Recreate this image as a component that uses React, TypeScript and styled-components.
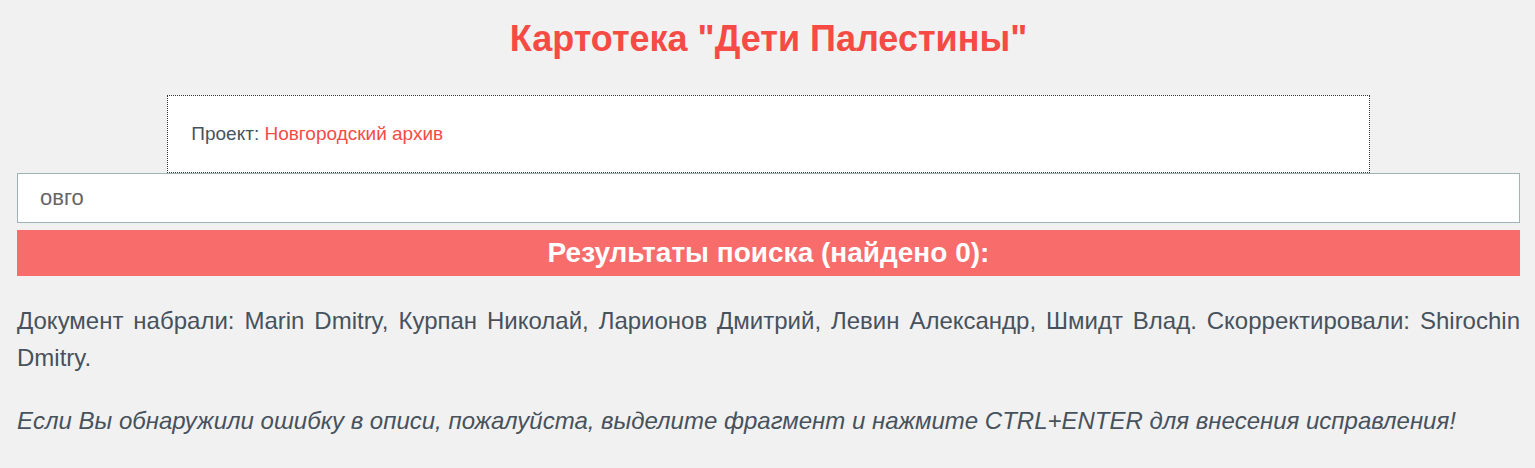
import styled, { createGlobalStyle } from 'styled-components';

const GlobalStyle = createGlobalStyle`
  html, body {
    margin: 0;
    padding: 0;
    background: #f1f1f1;
  }
  body {
    font-family: "Liberation Sans", Arial, sans-serif;
    color: #47525d;
  }
`;

const Page = styled.div`
  padding: 0 15px 0 17px;
`;

const Title = styled.h1`
  margin: 0;
  padding-top: 18px;
  height: 95px;
  box-sizing: border-box;
  text-align: center;
  font-size: 36px;
  line-height: 42px;
  font-weight: bold;
  color: #f64a45;
`;

const ProjectBox = styled.div`
  width: 80%;
  margin: 0 auto;
  box-sizing: border-box;
  padding: 25px 23px;
  background: #fff;
  border: 1px dotted #333;
  font-size: 19px;
  line-height: 26px;
`;

const ProjectLink = styled.a`
  color: #f64a45;
  text-decoration: none;
`;

const SearchInput = styled.input`
  display: block;
  width: 100%;
  height: 50px;
  box-sizing: border-box;
  margin: 0;
  padding: 0 22px;
  border: 1px solid #9db3b6;
  background: #fff;
  font-family: "Liberation Sans", Arial, sans-serif;
  font-size: 22px;
  color: #666;
  outline: none;
  caret-color: #333;
`;

const ResultsBar = styled.h2`
  margin: 7px 0 0;
  height: 46px;
  background: #f86c6b;
  color: #fff;
  text-align: center;
  font-size: 28px;
  line-height: 46px;
  font-weight: bold;
`;

const Content = styled.div`
  padding-top: 26px;
`;

const Paragraph = styled.p<{ $italic?: boolean }>`
  margin: 0 0 26px;
  font-size: 24px;
  line-height: 37px;
  text-align: justify;
  font-style: ${p => (p.$italic ? 'italic' : 'normal')};
`;

export default function App() {
  return (
    <>
      <GlobalStyle />
      <Page>
        <Title>Картотека "Дети Палестины"</Title>
        <ProjectBox>
          Проект: <ProjectLink href="#">Новгородский архив</ProjectLink>
        </ProjectBox>
        <SearchInput type="text" defaultValue="овго" autoFocus />
        <ResultsBar>Результаты поиска (найдено 0):</ResultsBar>
        <Content>
          <Paragraph>
            Документ набрали: Marin Dmitry, Курпан Николай, Ларионов Дмитрий, Левин Александр, Шмидт Влад. Скорректировали: Shirochin Dmitry.
          </Paragraph>
          <Paragraph $italic>
            Если Вы обнаружили ошибку в описи, пожалуйста, выделите фрагмент и нажмите CTRL+ENTER для внесения исправления!
          </Paragraph>
        </Content>
      </Page>
    </>
  );
}
